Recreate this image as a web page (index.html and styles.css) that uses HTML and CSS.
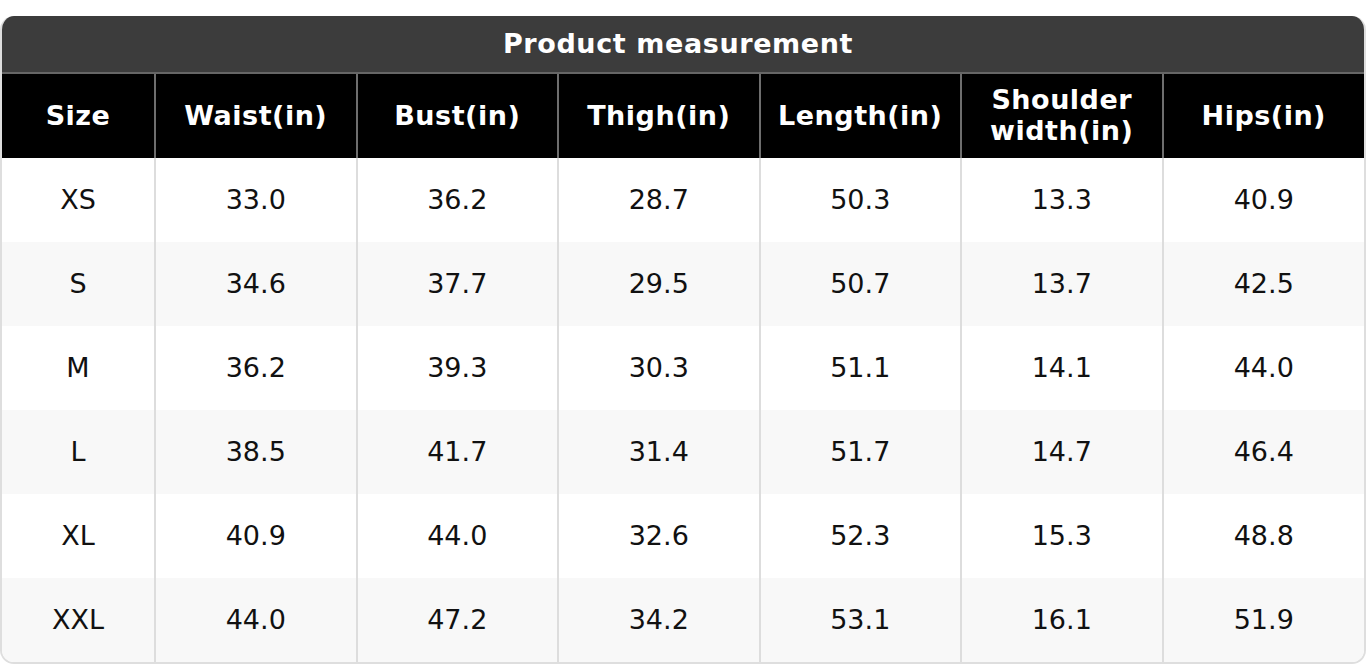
FILE: index.html
```html
<!DOCTYPE html>
<html>
<head>
<meta charset="utf-8">
<link rel="stylesheet" href="styles.css">
</head>
<body>
<div class="card">
  <div class="title">Product measurement</div>
  <table class="sizes">
    <colgroup>
      <col class="c-size">
      <col><col><col><col><col><col>
    </colgroup>
    <thead>
      <tr>
        <th>Size</th>
        <th>Waist(in)</th>
        <th>Bust(in)</th>
        <th>Thigh(in)</th>
        <th>Length(in)</th>
        <th>Shoulder<br>width(in)</th>
        <th>Hips(in)</th>
      </tr>
    </thead>
    <tbody>
      <tr><td>XS</td><td>33.0</td><td>36.2</td><td>28.7</td><td>50.3</td><td>13.3</td><td>40.9</td></tr>
      <tr><td>S</td><td>34.6</td><td>37.7</td><td>29.5</td><td>50.7</td><td>13.7</td><td>42.5</td></tr>
      <tr><td>M</td><td>36.2</td><td>39.3</td><td>30.3</td><td>51.1</td><td>14.1</td><td>44.0</td></tr>
      <tr><td>L</td><td>38.5</td><td>41.7</td><td>31.4</td><td>51.7</td><td>14.7</td><td>46.4</td></tr>
      <tr><td>XL</td><td>40.9</td><td>44.0</td><td>32.6</td><td>52.3</td><td>15.3</td><td>48.8</td></tr>
      <tr><td>XXL</td><td>44.0</td><td>47.2</td><td>34.2</td><td>53.1</td><td>16.1</td><td>51.9</td></tr>
    </tbody>
  </table>
</div>
</body>
</html>
```

FILE: styles.css
```css
html, body {
  margin: 0;
  padding: 0;
  background: #ffffff;
}

body {
  padding-top: 16px;
  font-family: "DejaVu Sans", "Liberation Sans", sans-serif;
}

.card {
  width: 1366px;
  box-sizing: border-box;
  border: 2px solid #dedede;
  border-top: none;
  border-radius: 14px;
  overflow: hidden;
  background: #ffffff;
}

.title {
  height: 56px;
  box-sizing: border-box;
  padding-right: 10px;
  background: #3c3c3c;
  color: #ffffff;
  font-weight: bold;
  font-size: 27px;
  letter-spacing: 0.6px;
  line-height: 55px;
  text-align: center;
  margin: 0 -2px;
}

.sizes {
  width: 100%;
  border-collapse: collapse;
  table-layout: fixed;
}

.c-size {
  width: 153px;
}

.sizes th {
  background: #000000;
  color: #ffffff;
  font-weight: bold;
  font-size: 27px;
  letter-spacing: 0.5px;
  line-height: 31px;
  height: 82px;
  padding: 0 0 2px 0;
  text-align: center;
  vertical-align: middle;
  border-top: 2px solid #666666;
  border-left: 2px solid #6e6e6e;
}

.sizes td {
  color: #111111;
  font-size: 27px;
  height: 82px;
  padding: 0 0 2px 0;
  text-align: center;
  vertical-align: middle;
  border-left: 2px solid #dddddd;
}

.sizes th:first-child,
.sizes td:first-child {
  border-left: none;
}

.sizes tbody tr:nth-child(even) td {
  background: #f8f8f8;
}
```
